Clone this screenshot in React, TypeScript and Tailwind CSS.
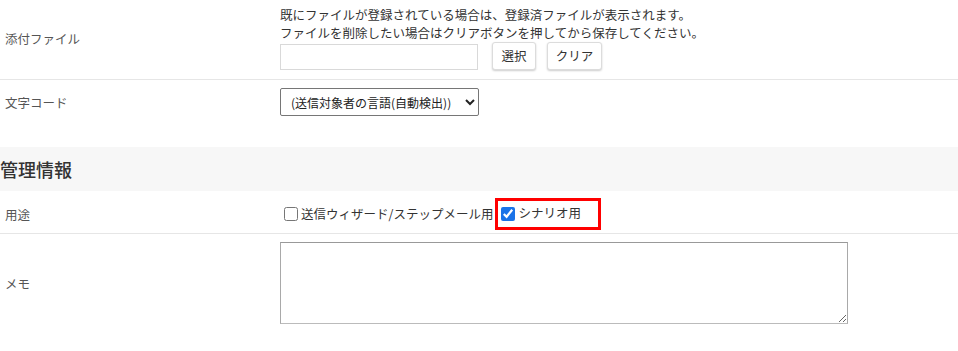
import React from "react"

const font = { fontFamily: '"Noto Sans CJK JP", "Noto Sans", sans-serif' }

function Row({
  label,
  children,
  className = "",
  labelClass = "",
}: {
  label: string
  children: React.ReactNode
  className?: string
  labelClass?: string
}) {
  return (
    <div className={"flex " + className}>
      <div className={"flex w-[280px] shrink-0 items-center pl-[5px] text-[12.5px] text-[#555] " + labelClass}>
        {label}
      </div>
      <div className="flex-1">{children}</div>
    </div>
  )
}

export default function App() {
  return (
    <div style={font} className="h-[351px] w-[958px] overflow-hidden bg-white text-[12.5px] text-[#333]">
      {/* attachment */}
      <Row label="添付ファイル" className="border-b border-[#e6e6e6]">
        <div className="pt-[6px] pb-[9px]">
          <p className="leading-[18px]">既にファイルが登録されている場合は、登録済ファイルが表示されます。</p>
          <p className="leading-[18px]">ファイルを削除したい場合はクリアボタンを押してから保存してください。</p>
          <div className="flex items-end">
            <input
              type="text"
              className="h-[26px] w-[198px] border border-[#d9d9d9] bg-white px-2 outline-none"
            />
            <button className="ml-[14px] h-[28px] w-[44px] rounded-[3px] border border-[#dcdcdc] bg-white text-[12.5px] shadow-[0_1px_2px_rgba(0,0,0,0.2)]">
              選択
            </button>
            <button className="ml-[11px] h-[28px] w-[55px] rounded-[3px] border border-[#dcdcdc] bg-white text-[12.5px] shadow-[0_1px_2px_rgba(0,0,0,0.2)]">
              クリア
            </button>
          </div>
        </div>
      </Row>

      {/* charset */}
      <Row label="文字コード" labelClass="pt-[2px]">
        <div className="py-[8px]">
          <select className="h-[28px] w-[199px] rounded-[2px] border border-[#767676] bg-white pl-[6px] text-[12px] text-[#222]">
            <option>(送信対象者の言語(自動検出))</option>
          </select>
        </div>
      </Row>

      {/* section header */}
      <div className="mt-[23px] flex h-[44px] items-center bg-[#f7f7f7] text-[18px] font-medium text-[#333]">
        管理情報
      </div>

      {/* usage */}
      <Row label="用途" className="h-[43px] border-b border-[#e6e6e6]" labelClass="pt-[6px]">
        <div className="flex h-full items-center pt-[4px] text-[12.5px]">
          <label className="flex items-center">
            <input type="checkbox" className="ml-[4px] mr-[3px] h-[14px] w-[14px]" />
            <span>送信ウィザード/ステップメール用</span>
          </label>
          <label className="ml-[2px] mt-[-1px] flex h-[32px] w-[106px] items-center border-[3px] border-[#ff0000]">
            <input type="checkbox" defaultChecked className="ml-[3px] mr-[3px] h-[14px] w-[14px] accent-[#1a73e8]" />
            <span>シナリオ用</span>
          </label>
        </div>
      </Row>

      {/* memo */}
      <Row label="メモ">
        <div className="pt-[8px] pb-[10px]">
          <textarea className="block h-[82px] w-[568px] resize-y border border-[#a9a9a9] border-t-[#999] border-b-[#bbb] bg-white outline-none" />
        </div>
      </Row>
    </div>
  )
}
